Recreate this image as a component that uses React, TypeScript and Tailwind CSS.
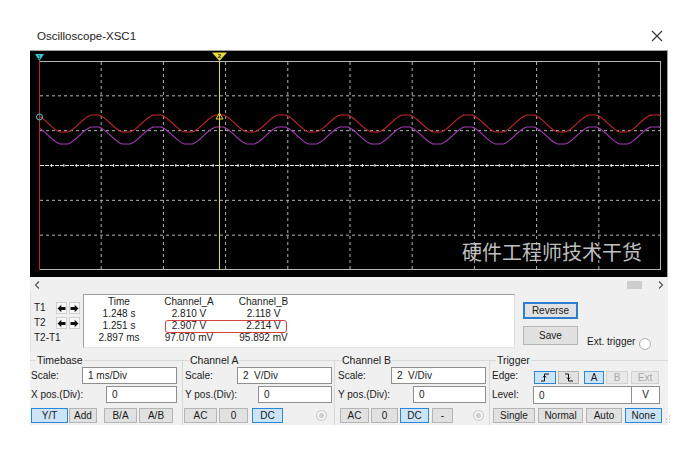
import React from "react";
import clsx from "clsx";

const PERIOD = 62.2;

// clipped sine, both traces peak at the same x
function tracePath(cy: number, amp: number) {
  let d = "";
  for (let x = 9; x <= 631; x += 1) {
    const s = Math.max(-1, Math.min(1, Math.cos((2 * Math.PI * (x - 65)) / PERIOD) * 1.08));
    const y = cy - amp * s;
    d += (x === 9 ? "M" : "L") + x + " " + y.toFixed(2) + " ";
  }
  return d;
}

const vLines = Array.from({ length: 9 }, (_, i) => 9 + PERIOD * (i + 1));
const hLines = Array.from({ length: 5 }, (_, i) => 10 + 34.83 * (i + 1));
const ticks = Array.from({ length: 49 }, (_, i) => 9 + (PERIOD / 5) * (i + 1));

function Scope() {
  return (
    <div className="relative h-[227px] bg-black border-t border-r border-[#a0a0a0]">
      <svg width="638" height="227" className="block">
        <rect x="9.5" y="10.5" width="621" height="208" fill="none" stroke="#b8b8b8" />
        {vLines.map((x) => (
          <line key={x} x1={x} y1="11" x2={x} y2="218" stroke="#b5b5b5" strokeDasharray="3 3" />
        ))}
        {hLines.map((y, i) =>
          i === 2 ? null : (
            <line key={y} x1="10" y1={y} x2="630" y2={y} stroke="#b5b5b5" strokeDasharray="3 3" />
          )
        )}
        <line x1="10" y1="114.5" x2="630" y2="114.5" stroke="#e6e6e6" strokeDasharray="4 1" />
        {ticks.map((x) => (
          <line key={x} x1={x} y1="113" x2={x} y2="116" stroke="#e6e6e6" />
        ))}
        <path d={tracePath(72.5, 8.5)} fill="none" stroke="#c4262c" strokeWidth="1.1" />
        <path d={tracePath(84.5, 8.5)} fill="none" stroke="#a43cb4" strokeWidth="1.1" />
        {/* T1 cursor */}
        <line x1="9.5" y1="10" x2="9.5" y2="219" stroke="#c81e1e" />
        <polygon points="5,3 14,3 9.5,10" fill="#3cc6d2" />
        <text x="9.5" y="8" fontSize="5" textAnchor="middle" fill="#1a1a1a" fontFamily="Liberation Sans, sans-serif">1</text>
        <circle cx="9.5" cy="66" r="3" fill="none" stroke="#4fd0d8" />
        {/* T2 cursor */}
        <line x1="189.5" y1="10" x2="189.5" y2="219" stroke="#e6dc3a" />
        <polygon points="182,1.5 197,1.5 189.5,10" fill="#e8dc3c" />
        <text x="189.5" y="7" fontSize="6" textAnchor="middle" fill="#1a1a1a" fontWeight="bold" fontFamily="Liberation Sans, sans-serif">2</text>
        <polygon points="186,68 193,68 189.5,62" fill="none" stroke="#e8dc3c" />
      </svg>
      <span className="absolute left-[432px] top-[189px] text-[20px] leading-[24px] text-[#bfbfbf] font-['Noto_Sans_CJK_SC',sans-serif]">
        硬件工程师技术干货
      </span>
    </div>
  );
}

function Btn({
  children,
  className,
  sel,
  dis,
}: {
  children: React.ReactNode;
  className?: string;
  sel?: boolean;
  dis?: boolean;
}) {
  return (
    <button
      className={clsx(
        "flex items-center justify-center border text-[10px] leading-none shrink-0",
        sel
          ? "bg-[#cce4f7] border-[#2c86d8] text-[#1a1a1a]"
          : dis
          ? "bg-[#e8e8e8] border-[#d2d2d2] text-[#a8a8a8]"
          : "bg-[#e1e1e1] border-[#b4b4b4] text-[#1a1a1a]",
        className
      )}
    >
      {children}
    </button>
  );
}

function Field({ value, className }: { value: string; className?: string }) {
  return (
    <input
      readOnly
      value={value}
      className={clsx(
        "bg-white border border-[#8f8f8f] pl-[5px] text-[10px] text-[#1a1a1a] outline-none shrink-0",
        className
      )}
    />
  );
}

function Radio({ className }: { className?: string }) {
  return (
    <span
      className={clsx(
        "w-[11px] h-[11px] rounded-full border border-[#c4c4c4] bg-[#f4f4f4] flex items-center justify-center shrink-0",
        className
      )}
    >
      <span className="w-[5px] h-[5px] rounded-full bg-[#cdcdcd]" />
    </span>
  );
}

function Arrow({ left }: { left?: boolean }) {
  return (
    <span className="w-[11px] h-[12px] bg-[#f7f7f7] border border-[#cfcfcf] flex items-center justify-center shrink-0">
      <svg width="9" height="9" viewBox="0 0 9 9">
        {left ? (
          <path d="M0.5 4.5 L4.3 0.7 V3 H8.5 V6 H4.3 V8.3 Z" fill="#111" />
        ) : (
          <path d="M8.5 4.5 L4.7 0.7 V3 H0.5 V6 H4.7 V8.3 Z" fill="#111" />
        )}
      </svg>
    </span>
  );
}

function Group({
  title,
  className,
  children,
}: {
  title: string;
  className?: string;
  children: React.ReactNode;
}) {
  return (
    <fieldset className={clsx("border-t border-r border-[#d9d9d9] h-[72px] min-w-0", className)}>
      <legend className="ml-[6px] px-[1px] text-[10.5px] leading-[14px] text-[#1a1a1a]">{title}</legend>
      {children}
    </fieldset>
  );
}

export default function App() {
  return (
    <div className="w-[691px] h-[463px] bg-white text-[#1a1a1a] font-['Liberation_Sans',Arial,sans-serif] overflow-hidden">
      <div className="h-[50px] flex items-start justify-between pt-[28px] pl-[37px] pr-[28px]">
        <span className="text-[11.5px] leading-[16px] text-[#222]">Oscilloscope-XSC1</span>
        <svg width="12" height="12" viewBox="0 0 12 12" className="mt-[2px]">
          <path d="M1 1 L11 11 M11 1 L1 11" stroke="#333" strokeWidth="1.1" />
        </svg>
      </div>

      <div className="ml-[30px] w-[638px]">
        <Scope />

        {/* scroll bar */}
        <div className="h-[15px] bg-[#f0f0f0] flex items-center justify-between pl-[4px] pr-[4px]">
          <svg width="6" height="8" viewBox="0 0 6 8">
            <path d="M5 0.5 L1.5 4 L5 7.5" fill="none" stroke="#555" strokeWidth="1.2" />
          </svg>
          <div className="flex items-center">
            <span className="w-[15px] h-[8px] bg-[#cdcdcd]" />
            <svg width="6" height="8" viewBox="0 0 6 8" className="ml-[16px]">
              <path d="M1 0.5 L4.5 4 L1 7.5" fill="none" stroke="#555" strokeWidth="1.2" />
            </svg>
          </div>
        </div>

        <div className="relative bg-[#f0f0f0] h-[133px]">
          {/* readout */}
          <div className="flex h-[61px]">
            <div className="w-[53px] pl-[3px] pt-[10px] text-[10px] leading-[12px] border-l border-[#e2e2e2]">
              <div className="flex items-center h-[12px]">
                <span className="w-[22px]">T1</span>
                <Arrow left />
                <span className="w-[2px]" />
                <Arrow />
              </div>
              <div className="flex items-center h-[12px] mt-[3px]">
                <span className="w-[22px]">T2</span>
                <Arrow left />
                <span className="w-[2px]" />
                <Arrow />
              </div>
              <div className="mt-[3px] h-[12px]">T2-T1</div>
            </div>

            <div className="relative w-[432px] h-[54px] mt-[2px] bg-white border-t border-l border-[#a0a0a0] border-r border-b border-r-[#dcdcdc] border-b-[#e6e6e6] flex pt-[1px] text-[10px] leading-[12px]">
              <div className="w-[70px] text-center">
                <div>Time</div>
                <div>1.248 s</div>
                <div>1.251 s</div>
                <div>2.897 ms</div>
              </div>
              <div className="w-[70px] text-center">
                <div>Channel_A</div>
                <div>2.810 V</div>
                <div>2.907 V</div>
                <div>97.070 mV</div>
              </div>
              <div className="w-[73px] ml-[3px] text-center">
                <div>Channel_B</div>
                <div>2.118 V</div>
                <div>2.214 V</div>
                <div>95.892 mV</div>
              </div>
              <span className="absolute left-[81px] top-[25px] w-[122px] h-[13px] border border-[#d9413f] rounded-[3px]" />
            </div>

            <div className="flex-1 pl-[8px] pt-[10px]">
              <button className="w-[55px] h-[17px] bg-[#e1e1e1] border-2 border-[#2c7fcf] text-[10px] leading-none flex items-center justify-center">
                Reverse
              </button>
              <div className="flex items-end mt-[7px]">
                <Btn className="w-[55px] h-[19px]">Save</Btn>
                <span className="ml-[9px] text-[10px] leading-[12px] mb-[-3px]">Ext. trigger</span>
                <span className="ml-[4px] mb-[-5px] w-[12px] h-[12px] rounded-full bg-white border border-[#b0b0b0]" />
              </div>
            </div>
          </div>

          {/* controls */}
          <div className="flex text-[10px] leading-[12px]">
            <Group title="Timebase" className="w-[153px]">
              <div className="flex items-center h-[17px] pl-[1px]">
                <span className="w-[51px]">Scale:</span>
                <Field value="1 ms/Div" className="w-[95px] h-[17px]" />
              </div>
              <div className="flex items-center h-[17px] mt-[2px] pl-[1px]">
                <span className="w-[75px]">X pos.(Div):</span>
                <Field value="0" className="w-[71px] h-[17px]" />
              </div>
              <div className="flex h-[15px] mt-[5px] pl-[1px]">
                <Btn sel className="w-[37px]">Y/T</Btn>
                <Btn className="w-[28px] ml-[1px]">Add</Btn>
                <Btn className="w-[33px] ml-[7px]">B/A</Btn>
                <Btn className="w-[34px] ml-[2px]">A/B</Btn>
              </div>
            </Group>

            <Group title="Channel A" className="w-[152px]">
              <div className="flex items-center h-[17px] pl-[2px]">
                <span className="w-[52px]">Scale:</span>
                <Field value="2  V/Div" className="w-[95px] h-[17px]" />
              </div>
              <div className="flex items-center h-[17px] mt-[2px] pl-[2px]">
                <span className="w-[73px]">Y pos.(Div):</span>
                <Field value="0" className="w-[74px] h-[17px]" />
              </div>
              <div className="flex items-center h-[15px] mt-[5px] pl-[1px]">
                <Btn className="w-[33px] h-[15px]">AC</Btn>
                <Btn className="w-[29px] h-[15px] ml-[2px]">0</Btn>
                <Btn sel className="w-[31px] h-[15px] ml-[4px]">DC</Btn>
                <Radio className="ml-[33px]" />
              </div>
            </Group>

            <Group title="Channel B" className="w-[155px]">
              <div className="flex items-center h-[17px] pl-[3px]">
                <span className="w-[53px]">Scale:</span>
                <Field value="2  V/Div" className="w-[95px] h-[17px]" />
              </div>
              <div className="flex items-center h-[17px] mt-[2px] pl-[3px]">
                <span className="w-[75px]">Y pos.(Div):</span>
                <Field value="0" className="w-[73px] h-[17px]" />
              </div>
              <div className="flex items-center h-[15px] mt-[5px] pl-[5px]">
                <Btn className="w-[29px] h-[15px]">AC</Btn>
                <Btn className="w-[27px] h-[15px] ml-[2px]">0</Btn>
                <Btn sel className="w-[29px] h-[15px] ml-[2px]">DC</Btn>
                <Btn className="w-[21px] h-[15px] ml-[3px]">-</Btn>
                <Radio className="ml-[20px]" />
              </div>
            </Group>

            <Group title="Trigger" className="w-[178px] border-r-0">
              <div className="flex items-end h-[17px] pl-[2px]">
                <span className="w-[42px] self-center">Edge:</span>
                <Btn sel className="w-[22px] h-[13px]">
                  <svg width="10" height="9" viewBox="0 0 10 9">
                    <path d="M1 8 H4.5 V1 H9" fill="none" stroke="#111" strokeWidth="1" />
                    <path d="M2.8 4.5 L4.5 2.5 L6.2 4.5" fill="none" stroke="#111" strokeWidth="0.9" />
                  </svg>
                </Btn>
                <Btn className="w-[21px] h-[13px] ml-[2px]">
                  <svg width="10" height="9" viewBox="0 0 10 9">
                    <path d="M1 1 H4.5 V8 H9" fill="none" stroke="#111" strokeWidth="1" />
                    <path d="M2.8 4.5 L4.5 6.5 L6.2 4.5" fill="none" stroke="#111" strokeWidth="0.9" />
                  </svg>
                </Btn>
                <Btn sel className="w-[20px] h-[13px] ml-[5px]">A</Btn>
                <Btn dis className="w-[22px] h-[13px] ml-[2px]">B</Btn>
                <Btn dis className="w-[28px] h-[13px] ml-[3px]">Ext</Btn>
              </div>
              <div className="flex items-end h-[18px] mt-[2px] pl-[2px]">
                <span className="w-[41px] self-center">Level:</span>
                <Field value="0" className="w-[99px] h-[18px]" />
                <span className="w-[28px] h-[18px] bg-white border border-[#8f8f8f] border-l-0 flex items-center justify-center">
                  V
                </span>
              </div>
              <div className="flex h-[15px] mt-[4px] pl-[3px]">
                <Btn className="w-[42px]">Single</Btn>
                <Btn className="w-[45px] ml-[3px]">Normal</Btn>
                <Btn className="w-[36px] ml-[3px]">Auto</Btn>
                <Btn sel className="w-[37px] ml-[3px]">None</Btn>
              </div>
            </Group>
          </div>

          <svg width="6" height="8" viewBox="0 0 6 8" className="absolute right-[-3px] bottom-[2px]">
            <circle cx="4.5" cy="1" r="0.7" fill="#bbb" />
            <circle cx="4.5" cy="4" r="0.7" fill="#bbb" />
            <circle cx="1.5" cy="4" r="0.7" fill="#bbb" />
            <circle cx="4.5" cy="7" r="0.7" fill="#bbb" />
            <circle cx="1.5" cy="7" r="0.7" fill="#bbb" />
          </svg>
        </div>
      </div>
    </div>
  );
}
